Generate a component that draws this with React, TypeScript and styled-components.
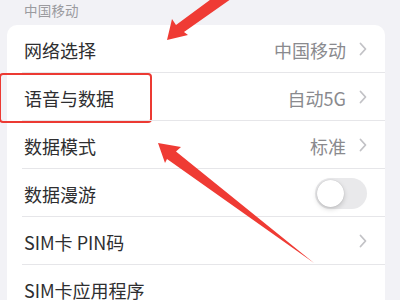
import React from "react";
import styled, { createGlobalStyle } from "styled-components";

const Global = createGlobalStyle`
  html, body { margin: 0; padding: 0; background: #f2f2f6; }
  body { font-family: "Noto Sans CJK SC", "Noto Sans", sans-serif; }
`;

const Page = styled.div`
  position: relative;
  width: 400px;
  height: 300px;
  overflow: hidden;
  background: #f2f2f6;
  padding: 0 15px 0 7px;
  box-sizing: border-box;
`;

const SectionHeader = styled.div`
  height: 25px;
  padding-left: 17px;
  font-size: 13.5px;
  line-height: 20px;
  color: #9b9b9f;
  letter-spacing: 0.2px;
`;

const Card = styled.div`
  background: #ffffff;
  border-radius: 10px;
  display: flex;
  flex-direction: column;
`;

const Row = styled.div<{ $last?: boolean }>`
  position: relative;
  height: 48px;
  display: flex;
  align-items: center;
  padding: 0 18px 0 17px;
  box-sizing: border-box;
  &::after {
    content: "";
    display: ${(p) => (p.$last ? "none" : "block")};
    position: absolute;
    left: 15px;
    right: 0;
    bottom: 0;
    height: 1px;
    background: #e6e6e9;
  }
`;

const Label = styled.span`
  flex: 1;
  font-size: 18px;
  color: #2e2e30;
  padding-top: 2px;
`;

const Value = styled.span`
  font-size: 18px;
  color: #8a8a8e;
  margin-right: 13px;
  padding-top: 2px;
`;

const Toggle = styled.div`
  position: relative;
  width: 52px;
  height: 31px;
  border-radius: 16px;
  background: #e9e9eb;
`;

const Knob = styled.div`
  position: absolute;
  top: 2px;
  left: 2px;
  width: 27px;
  height: 27px;
  border-radius: 50%;
  background: #ffffff;
  box-shadow: 0 2px 5px rgba(0, 0, 0, 0.18), 0 0 1px rgba(0, 0, 0, 0.2);
`;

const Highlight = styled.div`
  position: absolute;
  left: -8px;
  top: 0;
  width: 153px;
  height: 50px;
  border: 2.5px solid #ec3a33;
  border-radius: 4px;
  box-sizing: border-box;
  pointer-events: none;
`;

const Overlay = styled.svg`
  position: absolute;
  left: 0;
  top: 0;
  pointer-events: none;
`;

const Chevron = () => (
  <svg width="8" height="14" viewBox="0 0 8 14">
    <polyline
      points="1.5,1.5 6.5,7 1.5,12.5"
      fill="none"
      stroke="#c2c2c6"
      strokeWidth="1.8"
      strokeLinecap="round"
      strokeLinejoin="round"
    />
  </svg>
);

type Item = { label: string; value?: string; chevron?: boolean; toggle?: boolean; boxed?: boolean };

const items: Item[] = [
  { label: "网络选择", value: "中国移动", chevron: true },
  { label: "语音与数据", value: "自动5G", chevron: true, boxed: true },
  { label: "数据模式", value: "标准", chevron: true },
  { label: "数据漫游", toggle: true },
  { label: "SIM卡 PIN码", chevron: true },
  { label: "SIM卡应用程序" },
];

export default function App() {
  return (
    <>
      <Global />
      <Page>
        <SectionHeader>中国移动</SectionHeader>
        <Card>
          {items.map((it, i) => (
            <Row key={it.label} $last={i === items.length - 1}>
              <Label>{it.label}</Label>
              {it.value && <Value>{it.value}</Value>}
              {it.chevron && <Chevron />}
              {it.toggle && (
                <Toggle>
                  <Knob />
                </Toggle>
              )}
              {it.boxed && <Highlight />}
            </Row>
          ))}
        </Card>
        <Overlay width="400" height="300" viewBox="0 0 400 300">
          <polygon
            fill="#ef3b34"
            points="167,40 172,19 176,25 218,-6 238,-6 184,32 188,35"
          />
          <polygon
            fill="#ef3b34"
            points="158,143 181,147 176,151.5 314,263 167,159 165,163"
          />
        </Overlay>
      </Page>
    </>
  );
}
